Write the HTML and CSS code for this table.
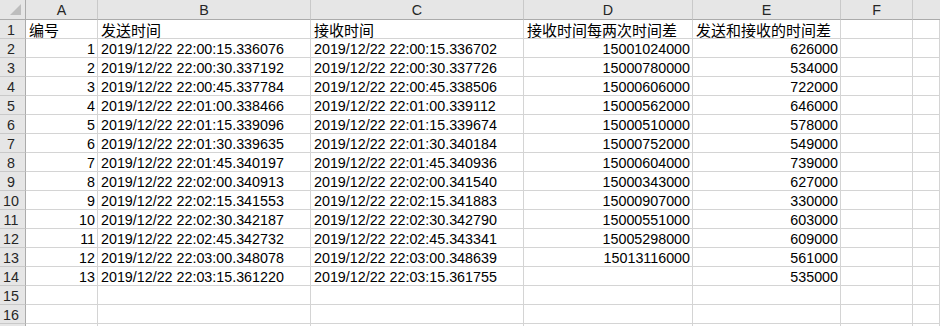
FILE: index.html
```html
<!DOCTYPE html>
<html lang="zh">
<head>
<meta charset="utf-8">
<link rel="stylesheet" href="styles.css">
</head>
<body>
<div class="sheet">
  <div class="row colhead">
    <div class="corner"><svg class="tri" width="12" height="12" viewBox="0 0 12 12"><polygon points="11,0 11,11 0,11" fill="#bdbdbd"/></svg></div>
    <div class="ch">A</div><div class="ch">B</div><div class="ch">C</div><div class="ch">D</div><div class="ch">E</div><div class="ch">F</div><div class="ch last"></div>
  </div>
  <div class="row">
    <div class="rh">1</div>
    <div class="c cjk">编号</div><div class="c cjk">发送时间</div><div class="c cjk">接收时间</div><div class="c cjk">接收时间每两次时间差</div><div class="c cjk">发送和接收的时间差</div><div class="c"></div><div class="c"></div>
  </div>
  <div class="row">
    <div class="rh">2</div>
    <div class="c r">1</div><div class="c">2019/12/22 22:00:15.336076</div><div class="c">2019/12/22 22:00:15.336702</div><div class="c r">15001024000</div><div class="c r">626000</div><div class="c"></div><div class="c"></div>
  </div>
  <div class="row">
    <div class="rh">3</div>
    <div class="c r">2</div><div class="c">2019/12/22 22:00:30.337192</div><div class="c">2019/12/22 22:00:30.337726</div><div class="c r">15000780000</div><div class="c r">534000</div><div class="c"></div><div class="c"></div>
  </div>
  <div class="row">
    <div class="rh">4</div>
    <div class="c r">3</div><div class="c">2019/12/22 22:00:45.337784</div><div class="c">2019/12/22 22:00:45.338506</div><div class="c r">15000606000</div><div class="c r">722000</div><div class="c"></div><div class="c"></div>
  </div>
  <div class="row">
    <div class="rh">5</div>
    <div class="c r">4</div><div class="c">2019/12/22 22:01:00.338466</div><div class="c">2019/12/22 22:01:00.339112</div><div class="c r">15000562000</div><div class="c r">646000</div><div class="c"></div><div class="c"></div>
  </div>
  <div class="row">
    <div class="rh">6</div>
    <div class="c r">5</div><div class="c">2019/12/22 22:01:15.339096</div><div class="c">2019/12/22 22:01:15.339674</div><div class="c r">15000510000</div><div class="c r">578000</div><div class="c"></div><div class="c"></div>
  </div>
  <div class="row">
    <div class="rh">7</div>
    <div class="c r">6</div><div class="c">2019/12/22 22:01:30.339635</div><div class="c">2019/12/22 22:01:30.340184</div><div class="c r">15000752000</div><div class="c r">549000</div><div class="c"></div><div class="c"></div>
  </div>
  <div class="row">
    <div class="rh">8</div>
    <div class="c r">7</div><div class="c">2019/12/22 22:01:45.340197</div><div class="c">2019/12/22 22:01:45.340936</div><div class="c r">15000604000</div><div class="c r">739000</div><div class="c"></div><div class="c"></div>
  </div>
  <div class="row">
    <div class="rh">9</div>
    <div class="c r">8</div><div class="c">2019/12/22 22:02:00.340913</div><div class="c">2019/12/22 22:02:00.341540</div><div class="c r">15000343000</div><div class="c r">627000</div><div class="c"></div><div class="c"></div>
  </div>
  <div class="row">
    <div class="rh">10</div>
    <div class="c r">9</div><div class="c">2019/12/22 22:02:15.341553</div><div class="c">2019/12/22 22:02:15.341883</div><div class="c r">15000907000</div><div class="c r">330000</div><div class="c"></div><div class="c"></div>
  </div>
  <div class="row">
    <div class="rh">11</div>
    <div class="c r">10</div><div class="c">2019/12/22 22:02:30.342187</div><div class="c">2019/12/22 22:02:30.342790</div><div class="c r">15000551000</div><div class="c r">603000</div><div class="c"></div><div class="c"></div>
  </div>
  <div class="row">
    <div class="rh">12</div>
    <div class="c r">11</div><div class="c">2019/12/22 22:02:45.342732</div><div class="c">2019/12/22 22:02:45.343341</div><div class="c r">15005298000</div><div class="c r">609000</div><div class="c"></div><div class="c"></div>
  </div>
  <div class="row">
    <div class="rh">13</div>
    <div class="c r">12</div><div class="c">2019/12/22 22:03:00.348078</div><div class="c">2019/12/22 22:03:00.348639</div><div class="c r">15013116000</div><div class="c r">561000</div><div class="c"></div><div class="c"></div>
  </div>
  <div class="row">
    <div class="rh">14</div>
    <div class="c r">13</div><div class="c">2019/12/22 22:03:15.361220</div><div class="c">2019/12/22 22:03:15.361755</div><div class="c r"></div><div class="c r">535000</div><div class="c"></div><div class="c"></div>
  </div>
  <div class="row">
    <div class="rh">15</div>
    <div class="c"></div><div class="c"></div><div class="c"></div><div class="c"></div><div class="c"></div><div class="c"></div><div class="c"></div>
  </div>
  <div class="row">
    <div class="rh">16</div>
    <div class="c"></div><div class="c"></div><div class="c"></div><div class="c"></div><div class="c"></div><div class="c"></div><div class="c"></div>
  </div>
  <div class="row">
    <div class="rh"></div>
    <div class="c"></div><div class="c"></div><div class="c"></div><div class="c"></div><div class="c"></div><div class="c"></div><div class="c"></div>
  </div>
</div>
</body>
</html>
```

FILE: styles.css
```css
html, body {
  margin: 0;
  padding: 0;
  background: #ffffff;
  overflow: hidden;
}
.sheet {
  width: 940px;
  height: 326px;
  overflow: hidden;
  font-family: "Liberation Sans", Arial, "Noto Sans CJK SC", sans-serif;
  font-size: 14.3px;
  color: #000;
}
.row {
  display: grid;
  grid-template-columns: 26px 72px 213px 213px 169px 148px 72px 1fr;
  height: 19px;
}
.row > div {
  box-sizing: border-box;
  height: 19px;
  overflow: hidden;
  white-space: nowrap;
  line-height: 18px;
  padding-top: 1px;
}
.colhead {
  height: 20px;
}
.colhead > div {
  height: 20px;
  background: #e6e6e6;
  border-right: 1px solid #c9c9c9;
  border-bottom: 1px solid #ababab;
  text-align: center;
  color: #262626;
  padding-top: 1px;
}
.colhead > .last {
  border-right: none;
}
.colhead > .corner {
  border-right: 1px solid #ababab;
  display: flex;
  justify-content: flex-end;
  align-items: flex-end;
  padding: 0 3px 3px 0;
}
.tri {
  display: block;
}
.rh {
  background: #e6e6e6;
  border-right: 1px solid #ababab;
  border-bottom: 1px solid #c9c9c9;
  text-align: center;
  padding-right: 3px;
  color: #262626;
}
.c {
  border-right: 1px solid #d4d4d4;
  border-bottom: 1px solid #d4d4d4;
  padding-left: 3px;
  padding-right: 2px;
}
.c.r {
  text-align: right;
}
.c.cjk {
  font-family: "Noto Sans CJK SC", sans-serif;
  font-size: 15px;
  padding-left: 3px;
}
```
